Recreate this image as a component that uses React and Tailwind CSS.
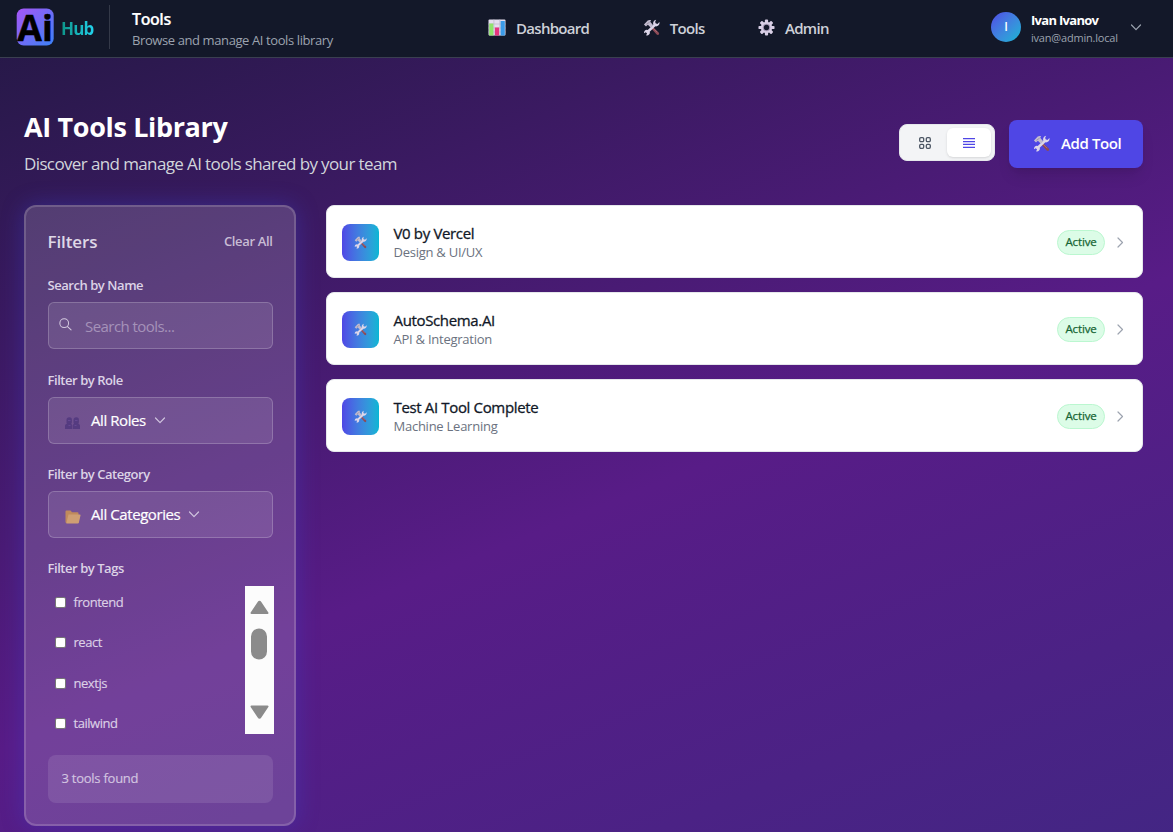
import React from "react";

function HammerWrench({ className }) {
  return (
    <svg viewBox="0 0 18 18" className={className}>
      <path d="M9 10.2l1.6-1.6 6 5.6a1.5 1.5 0 0 1-2.1 2.2z" fill="#8c4a56" />
      <path d="M10 9l5 5" stroke="#b0707a" strokeWidth="0.9" />
      <path d="M13.9.9a3.9 3.9 0 0 0-3 5.1L5 11.6a3 3 0 0 0-3.8 3.600l1.700-1.100 1.400 1.300-1 1.800a3 3 0 0 0 3.800-3.800l6-5.600a3.800 3.800 0 0 0 4.300-4.600l-2.100 2-2-.6-.4-1.800z" fill="#ddd6ea" />
      <path d="M1 5.8L5 1.6c1.200-.8 2.600-.8 3.600-.1l-1 1.300 1.600 2 1.600 1.800-2.400 2.600-2.200-2-1-1.200-1.300 1.200L3.200 8z" fill="#c3bcd0" />
      <path d="M3.600 5.6L7 3.400" stroke="#8e8799" strokeWidth="0.8" />
    </svg>
  );
}

function ChartIcon() {
  return (
    <svg viewBox="0 0 18 17" className="h-[17px] w-[18px]">
      <rect x="0.5" y="0.5" width="17" height="16" rx="1" fill="#e4deee" />
      <path d="M.5 5h17M.5 9h17M.5 13h17M5.900.5v16M11.800.5v16" stroke="#bdb6cc" strokeWidth="0.7" />
      <rect x="1.200" y="4.500" width="4.200" height="12" fill="#8fe36b" />
      <rect x="6.900" y="8.500" width="4.200" height="8" fill="#e6357f" />
      <rect x="12.600" y="2" width="4.200" height="14.500" fill="#3b9be8" />
    </svg>
  );
}

function GearIcon() {
  return (
    <svg viewBox="-9 -9 18 18" className="h-[17px] w-[17px]">
      <g fill="#d9cfe6">
        {[0, 45, 90, 135].map((a) => (
          <rect key={a} x="-1.700" y="-8.500" width="3.400" height="17" rx="1" transform={`rotate(${a})`} />
        ))}
        <circle r="6" />
      </g>
      <circle r="4" fill="#a79bb8" />
      <circle r="2.800" fill="#14182a" />
    </svg>
  );
}

function Chevron({ className, d = "M1.500 1l4.500 4.700L10.500 1", box = "0 0 12 7" }) {
  return (
    <svg viewBox={box} className={className} fill="none" stroke="currentColor" strokeWidth="1.2" strokeLinecap="round" strokeLinejoin="round">
      <path d={d} />
    </svg>
  );
}

function PeopleIcon() {
  return (
    <svg viewBox="0 0 15 12" className="h-3 w-[15px]">
      <g fill="#553b80">
        <path d="M1.500 3Q1.500.3 4.300.3T6.900 3v2Q7 6.300 6 7H2.200Q1.200 6 1.500 3z" />
        <path d="M8.500 3Q8.500.3 11.300.3T13.900 3v2Q14 6.300 13 7H9.200Q8.200 6 8.500 3z" />
        <path d="M0 12V9Q0 6.500 3 6.500h2q2.200 0 2.200 2V12z" />
        <path d="M7.800 12V8.500q0-2 2.200-2h2q3 0 3 2.500v3z" />
      </g>
      <path d="M3 3.500h2.500M10 3.500h2.500M3.500 8.500h2M9.500 8.500h2" stroke="#664893" strokeWidth="1.2" />
    </svg>
  );
}

function FolderIcon() {
  return (
    <svg viewBox="0 0 16 14" className="h-[14px] w-4">
      <path d="M.5 1.500Q.5.5 1.500.5h4l1.500 1.700h5.500q1 0 1 1V13H1.500q-1 0-1-1z" fill="#c08a5c" />
      <path d="M3.500 4.500h11.300q.9 0 .7.900l-1.700 7.300q-.2.800-1 .8H1.300z" fill="#cf9f73" />
    </svg>
  );
}

function NavItem({ icon, label }) {
  return (
    <a className="flex items-center">
      {icon}
      <span className="ml-2.5 text-[15px] font-semibold leading-5 tracking-[-0.7px] text-[#cdd0d8]">{label}</span>
    </a>
  );
}

function SelectBox({ icon, label }) {
  return (
    <div className="mt-2 flex h-[47px] items-center rounded-md border border-white/20 bg-white/10 pl-[16.500px]">
      <span className="mt-1 w-[26px]">{icon}</span>
      <span className="text-[15px] tracking-[-0.42px] text-white [-webkit-text-stroke:0.2px]">{label}</span>
      <Chevron className="ml-2 h-[7px] w-3 text-[#d0c4de]" />
    </div>
  );
}

function Label({ children }) {
  return <div className="text-[13px] font-semibold leading-[18px] tracking-[-0.45px] text-[#dcd3e6]">{children}</div>;
}

const tools = [
  { name: "V0 by Vercel", cat: "Design & UI/UX" },
  { name: "AutoSchema.AI", cat: "API & Integration" },
  { name: "Test AI Tool Complete", cat: "Machine Learning" },
];

const tags = ["frontend", "react", "nextjs", "tailwind"];

export default function App() {
  return (
    <div className="flex h-[832px] w-[1173px] flex-col overflow-hidden bg-[linear-gradient(158deg,#0f172a_-270px,#581c87_695px,#312e81_1660px)] font-['Open_Sans','Noto_Sans',sans-serif]">
      <header className="flex h-[58px] shrink-0 items-center border-b border-[#3a3f50] bg-[#131829]">
        <div className="-mt-[3px] ml-4 flex h-[44px] w-[94px] items-center border-r border-[#343948]">
          <svg viewBox="0 0 38 38" className="h-[38px] w-[38px] overflow-visible">
            <defs>
              <linearGradient id="logo" x1="0" y1="0" x2="1" y2="1">
                <stop offset="0" stopColor="#a855f7" />
                <stop offset="1" stopColor="#3b82f6" />
              </linearGradient>
            </defs>
            <rect x="0.700" y="0.500" width="37" height="37" rx="7" fill="url(#logo)" />
            <text x="1.300" y="33.300" textLength="35.500" lengthAdjust="spacingAndGlyphs" fontFamily="Open Sans" fontWeight="700" fontSize="36" fill="#000" stroke="#000" strokeWidth="0.5">Ai</text>
          </svg>
          <span className="ml-[7px] mt-[3px] bg-gradient-to-r from-[#0d9488] to-[#22d3ee] bg-clip-text text-[17px] font-bold leading-6 tracking-[-0.8px] text-transparent">Hub</span>
        </div>
        <div className="ml-[22px] w-[356px]">
          <div className="text-[16px] font-semibold leading-[22px] tracking-[-0.4px] text-white [-webkit-text-stroke:0.2px]">Tools</div>
          <div className="text-[13px] leading-[20px] tracking-[-0.4px] text-[#9ca3af]">Browse and manage AI tools library</div>
        </div>
        <nav className="-mt-0.5 flex w-[503px] items-center gap-[53.500px]">
          <NavItem icon={<ChartIcon />} label="Dashboard" />
          <NavItem icon={<HammerWrench className="h-[17px] w-[17px]" />} label="Tools" />
          <NavItem icon={<GearIcon />} label="Admin" />
        </nav>
        <div className="-mt-[3px] flex items-center">
          <div className="flex h-[30px] w-[30px] items-center justify-center rounded-full bg-gradient-to-br from-[#4f46e5] to-[#06b6d4] text-[12px] font-semibold text-white">I</div>
          <div className="ml-2.5 mt-[3px] w-[99px]">
            <div className="text-[13px] font-bold leading-[17px] tracking-[-0.7px] text-white">Ivan Ivanov</div>
            <div className="text-[11px] leading-[17px] tracking-[-0.2px] text-[#9ca3af]">ivan@admin.local</div>
          </div>
          <Chevron className="h-[7px] w-3 text-[#9ca3af]" />
        </div>
      </header>

      <main className="px-6 pt-[50px]">
        <div className="flex h-[97px] w-[1119px] items-start justify-between">
          <div>
            <h1 className="text-[27px] font-bold leading-[38px] tracking-[-0.350px] text-white">AI Tools Library</h1>
            <p className="mt-[5px] text-[17px] leading-[26px] tracking-[-0.620px] text-[#d1d5db]">Discover and manage AI tools shared by your team</p>
          </div>
          <div className="mt-[11.500px] flex items-center gap-[14.500px]">
            <div className="mt-[-2px] flex h-[37px] w-[96px] rounded-lg border border-[#e5e7eb] bg-[#f3f4f6] p-[3px]">
              <div className="flex w-[44px] items-center justify-center">
                <svg viewBox="0 0 12 12" className="h-3 w-3" fill="none" stroke="#4b5563" strokeWidth="1.3">
                  <rect x="0.700" y="0.700" width="4" height="4" rx="1.200" />
                  <rect x="7.300" y="0.700" width="4" height="4" rx="1.200" />
                  <rect x="0.700" y="7.300" width="4" height="4" rx="1.200" />
                  <rect x="7.300" y="7.300" width="4" height="4" rx="1.200" />
                </svg>
              </div>
              <div className="flex w-[44px] items-center justify-center rounded-md bg-white shadow-sm">
                <svg viewBox="0 0 12 10" className="h-[10px] w-3" fill="none" stroke="#4f46e5" strokeWidth="1.2">
                  <path d="M0 .7h12M0 3.600h12M0 6.400h12M0 9.300h12" />
                </svg>
              </div>
            </div>
            <div className="flex h-[48px] w-[134px] items-center rounded-lg bg-[#4f46e5] pl-6 shadow-lg">
              <HammerWrench className="h-[17px] w-[17px]" />
              <span className="ml-[11px] text-[15px] font-semibold tracking-[-0.4px] text-white">Add Tool</span>
            </div>
          </div>
        </div>

        <div className="flex items-start gap-[30px]">
          <aside className="h-[621px] w-[272px] rounded-xl border-2 border-white/[0.16] bg-white/[0.16] px-[21.500px] pt-[21px] shadow-[0_0_22px_rgba(59,72,220,0.35)]">
            <div className="flex items-center justify-between">
              <h2 className="text-[17px] font-semibold leading-7 tracking-[-0.1px] text-[#dfd8e6]">Filters</h2>
              <span className="text-[13px] font-semibold tracking-[-0.35px] text-[#c8bcd4]">Clear All</span>
            </div>
            <div className="mt-[20px]"><Label>Search by Name</Label></div>
            <div className="mt-2 flex h-[47px] items-center rounded-md border border-white/20 bg-white/10 pl-[10.500px]">
              <svg viewBox="0 0 14 14" className="-mt-0.5 h-[13px] w-[13px]" fill="none" stroke="#d5cbe0" strokeWidth="1.1" strokeLinecap="round">
                <circle cx="5.600" cy="5.600" r="4.700" />
                <path d="M9.200 9.200l3.800 3.600" />
              </svg>
              <span className="ml-[13px] mt-px text-[15px] tracking-[-0.55px] text-[#a592b9]">Search tools...</span>
            </div>
            <div className="mt-[22px]"><Label>Filter by Role</Label></div>
            <SelectBox icon={<PeopleIcon />} label="All Roles" />
            <div className="mt-[21px]"><Label>Filter by Category</Label></div>
            <SelectBox icon={<FolderIcon />} label="All Categories" />
            <div className="mt-[21px]"><Label>Filter by Tags</Label></div>
            <div className="mt-[9px] flex h-[148px] w-[226.500px] justify-between">
              <div className="pl-[7.500px] pt-[7px]">
                {tags.map((t) => (
                  <label key={t} className="flex h-[40.400px] items-start">
                    <span className="mt-1 h-[11px] w-[11px] rounded-[2px] border border-[#767676] bg-white" />
                    <span className="ml-[7.500px] text-[13px] leading-[18px] tracking-[-0.45px] text-[#dcd0e6] [-webkit-text-stroke:0.15px]">{t}</span>
                  </label>
                ))}
              </div>
              <div className="flex w-[29px] flex-col items-center bg-[#fcfcfc]">
                <svg viewBox="0 0 29 148" className="h-[148px] w-[29px]" fill="#8b8b8b" stroke="#8b8b8b" strokeWidth="2" strokeLinejoin="round">
                  <path d="M6.500 27L13.500 16.500Q14.500 15 15.500 16.500L22.500 27z" />
                  <rect x="7" y="43.500" width="14" height="29" rx="7" />
                  <path d="M6.500 120.500L13.500 131Q14.500 132.500 15.500 131L22.500 120.500z" />
                </svg>
              </div>
            </div>
            <div className="mt-[21px] flex h-[48px] items-center rounded-lg bg-white/10 pl-[14px] text-[13px] tracking-[-0.250px] text-[#d3c5e0] [-webkit-text-stroke:0.15px]">3 tools found</div>
          </aside>

          <section className="flex w-[817px] flex-col gap-[14px]">
            {tools.map((t) => (
              <article key={t.name} className="flex h-[73px] items-center rounded-lg border border-[#e5e7eb] bg-white pl-[15px] pr-[18px] pt-px">
                <div className="flex h-[37px] w-[37px] items-center justify-center rounded-lg bg-gradient-to-r from-[#4f46e5] to-[#06b6d4]">
                  <HammerWrench className="h-[13px] w-[13px]" />
                </div>
                <div className="ml-[14.500px] flex-1">
                  <div className="text-[15px] font-medium leading-[19px] tracking-[-0.35px] text-[#111827] [-webkit-text-stroke:0.3px]">{t.name}</div>
                  <div className="text-[13px] leading-[18px] tracking-[-0.25px] text-[#6b7280]">{t.cat}</div>
                </div>
                <span className="flex h-[25px] w-[48px] items-center justify-center rounded-full border border-[#bbf7d0] bg-[#dcfce7] text-[11.500px] font-medium tracking-[-0.15px] text-[#166534] [-webkit-text-stroke:0.250px]">Active</span>
                <Chevron className="ml-3 h-[11px] w-[7px] text-[#9ca3af]" box="0 0 7 11" d="M1 1l4.500 4.500L1 10" />
              </article>
            ))}
          </section>
        </div>
      </main>
    </div>
  );
}
